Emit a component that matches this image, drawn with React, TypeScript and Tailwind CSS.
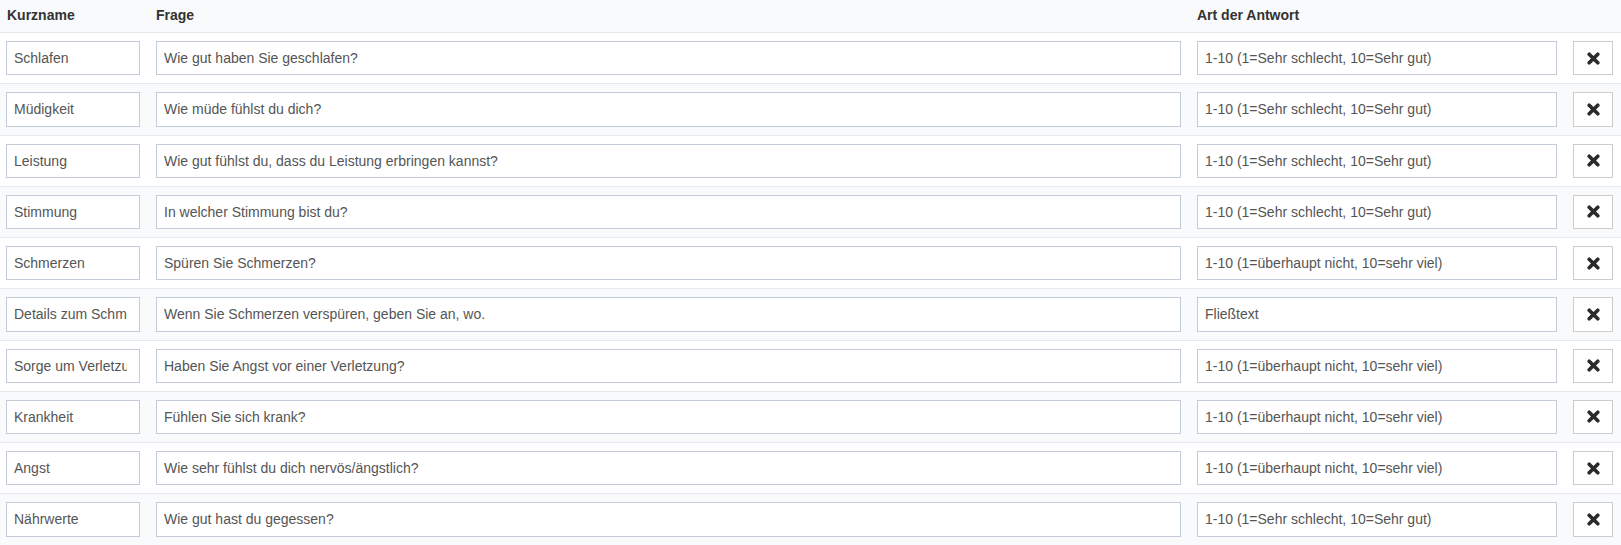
import React from 'react';

interface Question {
  id: string;
  name: string;
  question: string;
  answerType: string;
}

const scaleGood = '1-10 (1=Sehr schlecht, 10=Sehr gut)';
const scaleMuch = '1-10 (1=überhaupt nicht, 10=sehr viel)';

const questions: Question[] = [
  { id: '1', name: 'Schlafen', question: 'Wie gut haben Sie geschlafen?', answerType: scaleGood },
  { id: '2', name: 'Müdigkeit', question: 'Wie müde fühlst du dich?', answerType: scaleGood },
  { id: '3', name: 'Leistung', question: 'Wie gut fühlst du, dass du Leistung erbringen kannst?', answerType: scaleGood },
  { id: '4', name: 'Stimmung', question: 'In welcher Stimmung bist du?', answerType: scaleGood },
  { id: '5', name: 'Schmerzen', question: 'Spüren Sie Schmerzen?', answerType: scaleMuch },
  { id: '6', name: 'Details zum Schmerz', question: 'Wenn Sie Schmerzen verspüren, geben Sie an, wo.', answerType: 'Fließtext' },
  { id: '7', name: 'Sorge um Verletzung', question: 'Haben Sie Angst vor einer Verletzung?', answerType: scaleMuch },
  { id: '8', name: 'Krankheit', question: 'Fühlen Sie sich krank?', answerType: scaleMuch },
  { id: '9', name: 'Angst', question: 'Wie sehr fühlst du dich nervös/ängstlich?', answerType: scaleMuch },
  { id: '10', name: 'Nährwerte', question: 'Wie gut hast du gegessen?', answerType: scaleGood },
];

const inputClass =
  'block w-full h-[34.25px] border border-[#c3cad8] bg-white pl-[7px] pr-3 text-[14px] text-[#555] outline-none';

const gridClass = 'grid grid-cols-[134px_1fr_360px_40px] gap-x-4 pl-[6px] pr-2';

const App: React.FC = () => {
  return (
    <div className="w-full bg-white" style={{ fontFamily: '"Liberation Sans", Arial, sans-serif' }}>
      <div className={`${gridClass} h-8 bg-[#f9fafc] pt-[5px] text-[14px] font-bold leading-5 text-[#333]`}>
        <div className="pl-px">Kurzname</div>
        <div>Frage</div>
        <div>Art der Antwort</div>
        <div />
      </div>

      {questions.map((q, i) => (
        <div
          key={q.id}
          className={`${gridClass} border-t border-[#e6e9ef] py-2 ${i % 2 === 1 ? 'bg-[#f9fafc]' : 'bg-white'}`}
        >
          <input className={inputClass} defaultValue={q.name} />
          <input className={inputClass} defaultValue={q.question} />
          <input className={inputClass} defaultValue={q.answerType} />
          <button className="flex h-[34.25px] w-10 items-center justify-center border border-[#ccc] bg-white">
            <svg className="h-[13px] w-[13px]" viewBox="0 0 13 13" fill="none" stroke="#2a2a2a" strokeWidth={3.6} strokeLinecap="round">
              <path d="M2.2 2.2l8.6 8.6M10.8 2.2l-8.6 8.6" />
            </svg>
          </button>
        </div>
      ))}
    </div>
  );
};

export default App;
